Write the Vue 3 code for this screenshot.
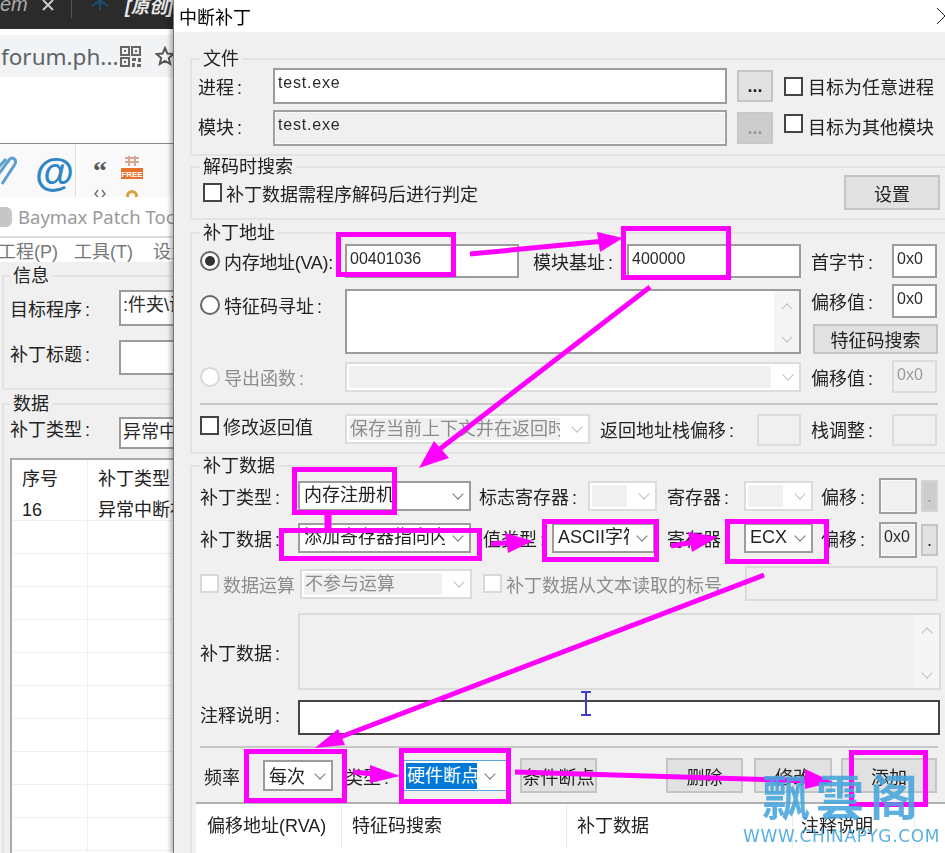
<script setup>
// pink annotation boxes, given by their outer edges
const boxes = [
  [336, 456, 232, 277],
  [621, 731, 226, 280],
  [292, 397, 467, 515],
  [279, 482, 528, 561],
  [542, 659, 519, 562],
  [725, 829, 519, 564],
  [244, 347, 749, 803],
  [399, 511, 748, 804],
  [849, 928, 750, 807],
].map(([x0, x1, y0, y1]) => ({ x: x0 + 2.5, y: y0 + 2.5, w: x1 - x0 - 5, h: y1 - y0 - 5 }));

const arrows = [
  { line: "470,254 605,241", head: "623,238 597,232 600,252" },
  { line: "650,287 432,455", head: "419,468 434,441 449,458" },
  { line: "491,544 515,542", head: "533,541 505,533 508,553" },
  { line: "671,546 700,541", head: "718,537 688,532 692,552" },
  { line: "764,575 330,741", head: "315,748 338,729 345,745" },
  { line: "353,772 385,775", head: "400,776 370,765 370,783" },
  { line: "515,772 815,781", head: "833,782 805,769 805,789" },
];
</script>

<template>
  <div class="page">
    <div class="behind">
      <div class="tabbar">
        <span class="tab-title">em</span>
        <svg class="tab-x" width="14" height="14" viewBox="0 0 14 14"><path d="M2 0 12 10M12 0 2 10" /></svg>
        <span class="tab-sep"></span>
        <svg class="tab-snow" width="22" height="22" viewBox="0 0 22 22"><path d="M11 0v18M3 4l16 10M19 4 3 14" /></svg>
        <span class="tab-news">[原创]</span>
      </div>
      <div class="addr">
        <div class="addr-pill">
          <span class="addr-text">forum.ph...</span>
          <svg class="qr" width="21" height="21" viewBox="0 0 21 21">
            <path d="M1 1h8v8H1zM12 1h8v8h-8zM1 12h8v8H1z" fill="none" stroke="#666" stroke-width="2" />
            <path d="M4 4h2v2H4zM15 4h2v2h-2zM4 15h2v2H4zM12 12h4v3h-4zM18 12h3v4h-3zM12 17h3v4h-3zM17 18h4v3h-4z" fill="#666" />
          </svg>
          <svg class="star" width="20" height="20" viewBox="0 0 20 20"><path d="M10 2l2.4 5.6 6 .5-4.6 4 1.4 5.9L10 15l-5.2 3 1.4-5.9-4.6-4 6-.5z" /></svg>
        </div>
      </div>
      <div class="blank"></div>
      <div class="toolbar">
        <svg class="clip" width="18" height="34" viewBox="0 0 18 34">
          <path d="M-5 24 9 5c3-4 8-1 6 4L2 29" />
          <path d="M-5 16 6 4" />
        </svg>
        <span class="at">@</span>
        <span class="tool-sep"></span>
        <div class="tool-col">
          <span class="quote">“</span>
          <svg width="12" height="8" viewBox="0 0 12 8"><path d="M4 1 1 5l3 3M8 1l3 4-3 3" fill="none" stroke="#777" stroke-width="1.5" /></svg>
        </div>
        <div class="tool-col free-col">
          <svg width="22" height="24" viewBox="0 0 22 24">
            <path d="M4 3h14M4 7h14M8 1v10M14 1v10" stroke="#d9a58f" stroke-width="2" fill="none" />
            <rect y="13" width="22" height="11" fill="#e8702a" />
            <text x="11" y="22" class="free-text">FREE</text>
          </svg>
          <span class="coin"></span>
        </div>
      </div>

      <div class="baymax">
        <div class="bm-title">
          <span class="bm-icon"></span>
          <span>Baymax Patch Tool</span>
        </div>
        <div class="bm-menu">
          <span>工程(P)</span>
          <span>工具(T)</span>
          <span>设置</span>
        </div>
        <div class="bm-body">
          <fieldset class="group bm-info">
            <legend>信息</legend>
            <div class="bm-row bm-row-first">
              <span class="lbl">目标程序 :</span>
              <div class="field">:件夹\设置</div>
            </div>
            <div class="bm-row bm-row-second">
              <span class="lbl">补丁标题 :</span>
              <div class="field"></div>
            </div>
          </fieldset>
          <fieldset class="group bm-data">
            <legend>数据</legend>
            <div class="bm-row bm-row-type">
              <span class="lbl">补丁类型 :</span>
              <div class="field">异常中断补丁</div>
            </div>
            <div class="bm-list">
              <div class="bm-tr bm-head"><span>序号</span><span>补丁类型</span></div>
              <div class="bm-tr"><span>16</span><span>异常中断补丁</span></div>
              <div v-for="n in 10" :key="n" class="bm-tr bm-empty"><span></span><span></span></div>
            </div>
          </fieldset>
        </div>
      </div>
    </div>

    <div class="dialog">
      <div class="titlebar">
        <span>中断补丁</span>
        <svg width="9" height="18" viewBox="0 0 9 18"><path d="M1 1 9 9 1 17" fill="none" stroke="#222" /></svg>
      </div>

      <div class="groups">
        <fieldset class="group g-file">
          <legend>文件</legend>
          <div class="file-row">
            <span class="lbl shift">进程 :</span>
            <div class="field test">test.exe</div>
            <button class="btn dots">...</button>
            <span class="check"></span>
            <span class="lbl">目标为任意进程</span>
          </div>
          <div class="file-row file-row2">
            <span class="lbl shift">模块 :</span>
            <div class="field readonly test">test.exe</div>
            <button class="btn dots dots-off">...</button>
            <span class="check"></span>
            <span class="lbl">目标为其他模块</span>
          </div>
        </fieldset>

        <fieldset class="group g-decode">
          <legend>解码时搜索</legend>
          <div class="decode-row">
            <span class="check check-decode"></span>
            <span class="lbl">补丁数据需程序解码后进行判定</span>
            <button class="btn set-btn">设置</button>
          </div>
        </fieldset>

        <fieldset class="group g-addr">
          <legend>补丁地址</legend>
          <div class="addr-grid">
            <div class="opt"><span class="radio on"></span><span class="lbl tight">内存地址(VA):</span></div>
            <div class="field">00401036</div>
            <span class="lbl pad14">模块基址 :</span>
            <div class="field">400000</div>
            <span class="lbl pad10">首字节 :</span>
            <div class="field">0x0</div>

            <div class="opt opt-sign"><span class="radio"></span><span class="lbl">特征码寻址 :</span></div>
            <div class="field area">
              <div class="scroll"><i class="chev up"></i><i class="chev"></i></div>
            </div>
            <span class="lbl pad10">偏移值 :</span>
            <div class="field">0x0</div>
            <button class="btn sign-btn">特征码搜索</button>

            <div class="opt off opt-export"><span class="radio"></span><span class="lbl">导出函数 :</span></div>
            <div class="combo disabled wide"><span class="combo-text"></span><i class="chev"></i></div>
            <span class="lbl pad10">偏移值 :</span>
            <div class="field off-field">0x0</div>
          </div>
          <div class="sep sep-addr"></div>
          <div class="ret-row">
            <div class="opt"><span class="check"></span><span class="lbl">修改返回值</span></div>
            <div class="combo disabled"><span class="combo-text">保存当前上下文并在返回时恢复</span><i class="chev"></i></div>
            <span class="lbl pad10">返回地址栈偏移 :</span>
            <div class="field off-field"></div>
            <span class="lbl pad10">栈调整 :</span>
            <div class="field off-field"></div>
          </div>
        </fieldset>

        <fieldset class="group g-data">
          <legend>补丁数据</legend>
          <div class="d-row d-row1">
            <span class="lbl">补丁类型 :</span>
            <div class="combo"><span class="combo-text">内存注册机</span><i class="chev"></i></div>
            <span class="lbl pad8">标志寄存器 :</span>
            <div class="combo disabled"><span class="combo-text"></span><i class="chev"></i></div>
            <span class="lbl pad10">寄存器 :</span>
            <div class="combo disabled"><span class="combo-text"></span><i class="chev"></i></div>
            <span class="lbl pad8">偏移 :</span>
            <div class="field readonly"></div>
            <button class="btn mini mini-off">.</button>
          </div>
          <div class="d-row d-row2">
            <span class="lbl">补丁数据 :</span>
            <div class="combo"><span class="combo-text">添加寄存器指向内存</span><i class="chev"></i></div>
            <span class="lbl pad12">值类型 :</span>
            <div class="combo"><span class="combo-text">ASCII字符串</span><i class="chev"></i></div>
            <span class="lbl pad12">寄存器 :</span>
            <div class="combo"><span class="combo-text">ECX</span><i class="chev"></i></div>
            <span class="lbl pad8">偏移 :</span>
            <div class="field readonly">0x0</div>
            <button class="btn mini">.</button>
          </div>
          <div class="d-row3">
            <div class="opt off"><span class="check"></span><span class="lbl">数据运算</span></div>
            <div class="combo disabled"><span class="combo-text">不参与运算</span><i class="chev"></i></div>
            <div class="opt off pad11"><span class="check"></span><span class="lbl">补丁数据从文本读取的标号</span></div>
            <div class="field off-field"></div>
          </div>
          <div class="d-row4">
            <span class="lbl">补丁数据 :</span>
            <div class="field area off-field">
              <div class="scroll"><i class="chev up"></i><i class="chev"></i></div>
            </div>
          </div>
          <div class="d-row5">
            <span class="lbl">注释说明 :</span>
            <div class="field note"></div>
          </div>
          <div class="sep sep-data"></div>
          <div class="d-row6">
            <span class="lbl">频率 :</span>
            <div class="combo"><span class="combo-text">每次</span><i class="chev"></i></div>
            <span class="lbl pad12">类型 :</span>
            <div class="combo focused"><span class="combo-text"><span class="selected">硬件断点</span></span><i class="chev"></i></div>
            <button class="btn b-cond">条件断点</button>
            <button class="btn b-del">删除</button>
            <button class="btn b-mod">修改</button>
            <button class="btn b-add">添加</button>
          </div>
          <div class="table">
            <div class="th">偏移地址(RVA)</div>
            <div class="th">特征码搜索</div>
            <div class="th">补丁数据</div>
            <div class="th">注释说明</div>
            <div class="th"></div>
          </div>
        </fieldset>
      </div>
    </div>

    <svg class="marks" width="945" height="853" viewBox="0 0 945 853">
      <rect v-for="(b, i) in boxes" :key="i" :x="b.x" :y="b.y" :width="b.w" :height="b.h" fill="none" stroke="#ff00ff" stroke-width="5" />
      <path d="M328 515v13" stroke="#ff00ff" stroke-width="7" />
      <g v-for="(a, i) in arrows" :key="'a' + i">
        <polyline :points="a.line" fill="none" stroke="#ff00ff" stroke-width="5" />
        <polygon :points="a.head" fill="#ff00ff" />
      </g>
      <path d="M581 692h10M586 692v23M581 715h10" fill="none" stroke="#4040c0" stroke-width="2" />
    </svg>

    <div class="mark-logo">
      <div class="logo-cn">飘雲阁</div>
      <div class="logo-en">WWW.CHINAPYG.COM</div>
    </div>
  </div>
</template>

<style>
html,
body {
  margin: 0;
  background: #fff;
}
</style>

<style scoped>
.page {
  position: relative;
  display: flex;
  width: 945px;
  height: 853px;
  overflow: hidden;
  font-family: "Liberation Sans", "Noto Sans CJK SC", sans-serif;
  font-size: 18px;
  color: #222;
  filter: blur(0.35px);
}

/* windows behind the dialog */
.behind {
  flex: 0 0 173px;
  width: 173px;
  height: 853px;
  overflow: hidden;
  background: #fff;
}
.tabbar {
  display: flex;
  align-items: flex-start;
  height: 29px;
  background: #2b2b2b;
  overflow: hidden;
}
.tab-title {
  flex: none;
  width: 40px;
  margin-top: -7px;
  font-style: italic;
  font-size: 20px;
  color: #aaa;
}
.tab-x {
  flex: none;
  margin: 0 0 0 1px;
  fill: none;
  stroke: #ccc;
  stroke-width: 2;
}
.tab-sep {
  flex: none;
  width: 1px;
  height: 18px;
  margin-left: 16px;
  background: #555;
}
.tab-snow {
  flex: none;
  margin: -8px 0 0 17px;
  fill: none;
  stroke: #1c4f75;
  stroke-width: 2;
}
.tab-news {
  flex: none;
  margin: -8px 0 0 14px;
  font-style: italic;
  font-weight: 700;
  font-size: 18px;
  color: #e8e8e8;
}
.addr {
  height: 48px;
  padding-top: 6px;
  box-sizing: border-box;
}
.addr-pill {
  display: flex;
  align-items: center;
  height: 42px;
  background: #f1f3f4;
}
.addr-text {
  flex: none;
  width: 118px;
  margin-left: 1px;
  font-family: "Noto Sans", sans-serif;
  font-size: 22.5px;
  color: #5f6368;
}
.qr {
  flex: none;
  margin-left: 1px;
}
.star {
  flex: none;
  margin-left: 14px;
  fill: none;
  stroke: #555;
  stroke-width: 2;
}
.blank {
  height: 66px;
  border-bottom: 1px solid #8a8a8a;
  box-sizing: content-box;
}
.toolbar {
  display: flex;
  align-items: flex-start;
  height: 53px;
  overflow: hidden;
  background: #f9f9f9;
}
.clip {
  flex: none;
  margin-top: 11px;
  fill: none;
  stroke: #5da0d0;
  stroke-width: 3;
}
.at {
  flex: none;
  width: 40px;
  margin: 6px 0 0 17px;
  font-size: 40px;
  line-height: 44px;
  font-weight: 700;
  color: #2f86c5;
}
.tool-sep {
  flex: none;
  width: 3px;
  height: 53px;
  margin-left: 0;
  background: #fff;
  border-left: 1px solid #ddd;
}
.tool-col {
  flex: none;
  display: flex;
  flex-direction: column;
  align-items: center;
  gap: 6px;
  width: 20px;
  margin: 15px 0 0 11px;
}
.quote {
  font-family: "Liberation Serif", serif;
  font-weight: 700;
  font-size: 28px;
  line-height: 24px;
  height: 24px;
  color: #555;
}
.free-col {
  margin: 11px 0 0 11px;
  width: 22px;
  gap: 11px;
}
.free-text {
  font-size: 8px;
  font-weight: 700;
  fill: #fff;
  text-anchor: middle;
}
.coin {
  flex: none;
  width: 12px;
  height: 12px;
  border-radius: 50%;
  border: 3px solid #d9a040;
  box-sizing: border-box;
}

.baymax {
  height: 656px;
}
.bm-title {
  display: flex;
  align-items: center;
  gap: 6px;
  height: 39px;
  font-family: "Noto Sans", sans-serif;
  font-size: 18.5px;
  color: #999;
  white-space: nowrap;
}
.bm-icon {
  flex: none;
  width: 12px;
  height: 20px;
  background: #c4c6c8;
  border-radius: 0 6px 6px 0;
}
.bm-menu {
  display: flex;
  height: 24px;
  align-items: center;
  border-top: 2px solid #ddd;
  color: #777;
  white-space: nowrap;
}
.bm-menu span {
  flex: none;
}
.bm-menu span:first-child {
  margin-left: -2px;
  width: 76px;
}
.bm-menu span:nth-child(2) {
  width: 79px;
}
.bm-body {
  height: 591px;
  padding: 5px 0 0 2px;
  background: #f0f0f0;
}
.group {
  width: 800px;
  margin: 0;
  padding: 0 0 8px 8px;
  min-width: 0;
  box-sizing: border-box;
  border: 2px solid #e3e3e3;
}
.group legend {
  margin-left: 0;
  padding: 0 3px;
  height: 18px;
  line-height: 18px;
  font-size: 18px;
}
.bm-info {
  width: 300px;
  height: 123px;
  padding-left: 6px;
}
.bm-data {
  width: 300px;
  height: 470px;
  margin-top: 5px;
  padding: 0 0 0 6px;
}
.bm-row {
  display: grid;
  grid-template-columns: 109px 200px;
  align-items: center;
}
.bm-row .field {
  padding-left: 2px;
  font-size: 18px;
  white-space: nowrap;
}
.bm-row-first {
  height: 36px;
  margin-top: 5px;
}
.bm-row-second {
  height: 35px;
  margin-top: 14px;
}
.bm-row-second .lbl {
  margin-top: -10px;
}
.bm-row-type {
  height: 32px;
  margin-top: 4px;
}
.bm-row-type .lbl {
  margin-top: -10px;
}
.bm-list {
  width: 280px;
  height: 400px;
  margin-top: 9px;
  background: #fff;
  border: 2px solid #aaa;
  box-sizing: border-box;
}
.bm-tr {
  display: grid;
  grid-template-columns: 76px 200px;
  height: 33px;
  align-items: center;
  box-sizing: border-box;
  border-bottom: 1px solid #f0f0f0;
  white-space: nowrap;
}
.bm-tr span {
  height: 100%;
  padding-left: 10px;
  line-height: 30px;
  box-sizing: border-box;
}
.bm-tr span:first-child {
  border-right: 1px solid #eee;
}
.bm-head {
  height: 40px;
  border-bottom: 0;
}
.bm-head span {
  line-height: 38px;
}
.bm-tr:nth-child(2) {
  height: 21px;
}
.bm-tr:nth-child(2) span {
  line-height: 20px;
}

/* dialog */
.dialog {
  position: relative;
  flex: 0 0 772px;
  width: 772px;
  height: 853px;
  overflow: hidden;
  background: #f0f0f0;
  border-left: 1px solid #777;
  box-sizing: border-box;
  box-shadow: -2px 0 5px rgba(0, 0, 0, 0.35);
}
.titlebar {
  display: flex;
  justify-content: space-between;
  align-items: center;
  height: 32px;
  padding-left: 5px;
  background: #fff;
  color: #000;
  font-size: 18px;
}
.groups {
  padding: 18px 0 0 16px;
}
.g-file {
  margin-bottom: 2px;
  padding-bottom: 8px;
}
.g-decode {
  margin-bottom: 4px;
}
.g-addr {
  margin-bottom: 3px;
  padding-bottom: 6px;
}
.g-data {
  height: 600px;
  padding-bottom: 0;
}
.lbl {
  white-space: nowrap;
  word-spacing: -2px;
}
.tight {
  letter-spacing: -0.3px;
}
.shift {
  margin-left: -2px;
}
.pad8 {
  padding-left: 8px;
}
.pad10 {
  padding-left: 10px;
}
.pad11 {
  padding-left: 11px;
}
.pad12 {
  padding-left: 12px;
}
.pad14 {
  padding-left: 14px;
}

.field {
  position: relative;
  height: 100%;
  padding-left: 3px;
  box-sizing: border-box;
  overflow: hidden;
  background: #fff;
  border: 2px solid #9c9c9c;
  font-size: 16px;
  line-height: 26px;
  color: #2a2a2a;
}
.field.readonly {
  background: #f0f0f0;
  border-color: #a0a0a0;
  box-shadow: inset 0 0 0 1px #fafafa;
}
.off-field {
  background: #f0f0f0;
  border-color: #dcdcdc;
  color: #9a9a9a;
}
.test {
  letter-spacing: 0.8px;
}
.btn {
  margin: 0;
  padding: 0;
  box-sizing: border-box;
  background: #e1e1e1;
  border: 2px solid #c4c4c4;
  font: inherit;
  color: #222;
}
.check {
  flex: none;
  display: block;
  width: 19px;
  height: 19px;
  box-sizing: border-box;
  background: #fff;
  border: 2px solid #444;
}
.radio {
  flex: none;
  position: relative;
  display: block;
  width: 20px;
  height: 20px;
  box-sizing: border-box;
  background: #fff;
  border: 2px solid #666;
  border-radius: 50%;
}
.radio.on::after {
  content: "";
  position: absolute;
  inset: 3px;
  border-radius: 50%;
  background: #333;
}
.opt {
  display: flex;
  align-items: center;
  gap: 4px;
}
.opt.off {
  color: #8c8c8c;
}
.opt.off .check,
.opt.off .radio {
  border-color: #d8d8d8;
}

.combo {
  display: flex;
  align-items: center;
  height: 100%;
  min-width: 0;
  box-sizing: border-box;
  background: #fff;
  border: 2px solid #9c9c9c;
  padding-right: 7px;
}
.combo-text {
  flex: 1;
  min-width: 0;
  height: 100%;
  padding-left: 4px;
  overflow: hidden;
  white-space: nowrap;
  line-height: 25px;
  margin-right: 9px;
}
.combo.disabled {
  border-color: #dcdcdc;
  color: #8c8c8c;
  padding-left: 2px;
}
.combo.disabled .combo-text {
  height: 22px;
  padding-left: 1px;
  margin-right: 13px;
  background: #f0f0f0;
  line-height: 22px;
}
.combo.focused {
  border: 0;
  border-top: 1px solid #5aa5e0;
  border-bottom: 1px solid #5aa5e0;
  padding-right: 12px;
}
.selected {
  display: inline-block;
  padding: 0 1px;
  height: 26px;
  line-height: 27px;
  margin: 2px 0 0 -2px;
  background: #0078d7;
  color: #fff;
  vertical-align: top;
}
.d-row6 .combo-text {
  line-height: 30px;
}
.chev {
  flex: none;
  display: block;
  width: 8px;
  height: 8px;
  margin-top: -4px;
  box-sizing: border-box;
  border-right: 1.5px solid #777;
  border-bottom: 1.5px solid #777;
  transform: rotate(45deg);
}
.disabled .chev,
.scroll .chev {
  border-color: #c0c0c0;
}
.chev.up {
  margin-top: 4px;
  transform: rotate(225deg);
}

.sep {
  height: 2px;
  background: #c8c8c8;
}

/* file group */
.file-row {
  display: grid;
  grid-template-columns: 73px 454px 36px 19px auto;
  grid-template-rows: 36px;
  align-items: center;
  justify-content: start;
}
.file-row2 {
  margin-top: 6px;
}
.dots {
  width: 36px;
  height: 32px;
  margin-left: 10px;
  line-height: 20px;
  font-weight: 700;
  color: #223;
}
.file-row .check {
  margin-left: 21px;
}
.file-row .lbl:last-child {
  margin-left: 26px;
}
.dots-off {
  background: #cdcdcd;
  border-color: #c8c8c8;
  color: #999;
}
.file-row2 .check {
  align-self: start;
  margin-top: 4px;
}
.file-row2 .lbl {
  margin-top: -4px;
}

/* decode group */
.decode-row {
  display: flex;
  align-items: center;
  height: 35px;
  margin-top: -1px;
}
.check-decode {
  margin: 0 4px 0 3px;
}
.set-btn {
  flex: none;
  width: 96px;
  height: 35px;
  margin-left: 366px;
}

/* address group */
.addr-grid {
  display: grid;
  grid-template-columns: 145px 174px 108px 174px 91px 45px;
  grid-template-rows: 34px 34px 30px 33px;
  row-gap: 6px;
  margin-top: 2px;
  align-items: center;
}
.addr-grid .area {
  grid-column: 2 / 5;
  grid-row: 2 / 4;
  margin-top: 5px;
  height: calc(100% - 5px);
}
.addr-grid .opt-sign {
  grid-row: 2;
  margin-top: 8px;
}
.addr-grid .opt-export {
  grid-row: 4;
  grid-column: 1;
}
.addr-grid .wide {
  grid-column: 2 / 5;
  height: 30px;
}
.sign-btn {
  grid-column: 5 / 7;
  grid-row: 3;
  height: 30px;
  margin-left: 12px;
  width: 125px;
}
.scroll {
  position: absolute;
  top: 0;
  right: 0;
  bottom: 0;
  width: 25px;
  display: flex;
  flex-direction: column;
  align-items: center;
  justify-content: space-between;
  padding: 10px 0 11px;
  box-sizing: border-box;
  background: #f5f5f5;
}
.sep-addr {
  width: 738px;
  margin-top: 10px;
}
.ret-row {
  display: grid;
  grid-template-columns: 145px 245px 167px 44px 91px 45px;
  grid-template-rows: 32px;
  margin-top: 9px;
  align-items: center;
}
.ret-row .opt {
  margin-top: -9px;
}
.ret-row .lbl {
  margin-top: -2px;
}
.ret-row .opt .lbl {
  margin-top: 0;
}
.ret-row .combo {
  height: 30px;
  align-self: start;
}

/* patch data group */
.d-row {
  display: grid;
  align-items: center;
  grid-template-rows: 36px;
}
.d-row .combo {
  height: 30px;
}
.d-row1 {
  grid-template-columns: 98px 173px 117px 69px 87px 69px 66px 38px 21px;
  margin-top: 3px;
}
.d-row2 {
  grid-template-columns: 98px 173px 81px 103px 89px 69px 66px 38px 21px;
  margin-top: 8px;
}
.d-row2 .lbl,
.d-row2 .combo {
  margin-top: -4px;
}
.mini {
  width: 17px;
  height: 32px;
  margin-left: 4px;
  line-height: 24px;
}
.mini-off {
  background: #cdcdcd;
  border-color: #d4d4d4;
  color: #999;
}
.d-row3 {
  display: grid;
  grid-template-columns: 100px 172px 273px 193px;
  grid-template-rows: 35px;
  align-items: center;
  margin-top: 8px;
}
.d-row3 .combo {
  height: 30px;
}
.d-row4 {
  display: grid;
  grid-template-columns: 98px 643px;
  grid-template-rows: 77px;
  align-items: center;
  margin-top: 12px;
}
.d-row5 {
  display: grid;
  grid-template-columns: 98px 642px;
  grid-template-rows: 35px;
  align-items: center;
  margin-top: 10px;
}
.d-row5 .lbl {
  margin-top: -8px;
}
.note {
  border-color: #444;
}
.sep-data {
  width: 738px;
  margin-top: 11px;
}
.d-row6 {
  display: grid;
  grid-template-columns: 63px 70px 71px 102px 91px 146px 89px 105px;
  grid-template-rows: 35px;
  align-items: center;
  margin-top: 10px;
}
.d-row6 > .lbl:first-child {
  padding-left: 4px;
}
.d-row6 .combo {
  height: 31px;
}
.d-row6 .btn {
  height: 35px;
  justify-self: end;
}
.b-cond,
.b-del {
  width: 77px;
}
.b-mod {
  width: 78px;
}
.b-add {
  width: 96px;
}
.table {
  display: grid;
  grid-template-columns: 146px 225px 226px 122px 60px;
  width: 800px;
  height: 60px;
  margin: 9px 0 0 -4px;
  background: #fff;
  border-top: 2px solid #b0b0b0;
}
.th {
  height: 44px;
  padding-left: 10px;
  line-height: 44px;
  box-sizing: border-box;
  border-right: 1px solid #ececec;
  white-space: nowrap;
}
.th:first-child {
  padding-left: 11px;
}
.th:nth-child(4) {
  padding-left: 8px;
}

/* pink marks drawn over the screenshot */
.marks {
  position: absolute;
  left: 0;
  top: 0;
  pointer-events: none;
}
.mark-logo {
  position: absolute;
  left: 743px;
  top: 770px;
  width: 202px;
  color: #45a5dc;
  pointer-events: none;
  opacity: 0.88;
  white-space: nowrap;
}
.logo-cn {
  margin-left: 19px;
  font-size: 48px;
  font-weight: 700;
  line-height: 58px;
  letter-spacing: 6px;
}
.logo-en {
  margin-top: -2px;
  font-family: "DejaVu Sans", sans-serif;
  font-size: 17px;
  line-height: 20px;
  letter-spacing: 0.65px;
}
</style>
